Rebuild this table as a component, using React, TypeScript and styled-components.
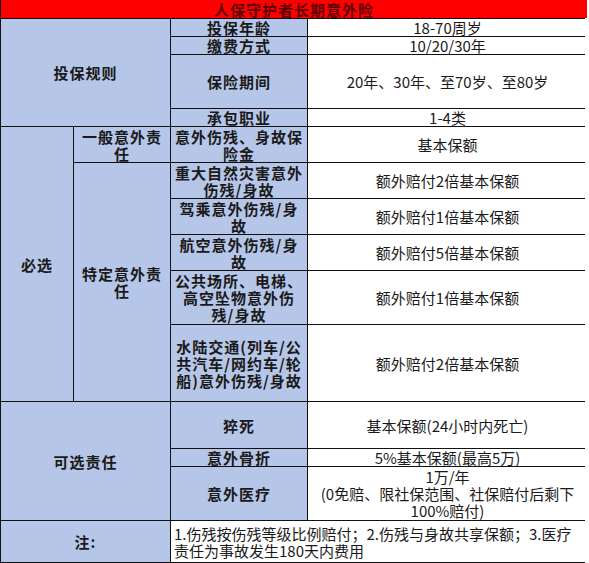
import { Fragment } from "react";
import styled, { createGlobalStyle } from "styled-components";

const GlobalStyle = createGlobalStyle`
  html, body {
    margin: 0;
    padding: 0;
    background: #ffffff;
  }
  body {
    font-family: "Noto Sans CJK SC", "Liberation Sans", sans-serif;
  }
`;

const Color = {
  LINE: "#111111",
  BLUE: "#b6c6e8",
  RED: "#ff0000",
  TITLE: "#5a0000",
};

const Sheet = styled.div`
  display: grid;
  width: 583px;
  grid-template-columns: 72px 96px 136px 279px;
  grid-template-rows: 18px 17px 17px 53px 17px 35px 35px 35px 35px 53px 76px 46px 17px 53px 41px;
  gap: 1px;
  padding: 0 1px 1px 1px;
  background: ${Color.LINE};
`;

interface CellProps {
  $col: string;
  $row: string;
  $kind?: "label" | "value" | "title" | "note";
}

const Cell = styled.div<CellProps>`
  grid-column: ${(p) => p.$col};
  grid-row: ${(p) => p.$row};
  display: flex;
  flex-direction: column;
  justify-content: center;
  align-items: ${(p) => (p.$kind === "note" ? "flex-start" : "center")};
  text-align: ${(p) => (p.$kind === "note" ? "left" : "center")};
  padding: 0 ${(p) => (p.$kind === "note" ? "3px" : "2px")};
  overflow: hidden;
  font-size: 15px;
  line-height: 17px;
  white-space: normal;
  word-break: break-all;
  background: ${(p) =>
    p.$kind === "title"
      ? Color.RED
      : p.$kind === "label"
      ? Color.BLUE
      : "#ffffff"};
  color: ${(p) => (p.$kind === "title" ? Color.TITLE : "#1a1a1a")};
  font-weight: ${(p) => (p.$kind === "label" || p.$kind === "title" ? 700 : 400)};
  letter-spacing: ${(p) => (p.$kind === "label" || p.$kind === "title" ? "1px" : "0")};
`;

const rules = [
  ["投保年龄", "18-70周岁"],
  ["缴费方式", "10/20/30年"],
  ["保险期间", "20年、30年、至70岁、至80岁"],
  ["承包职业", "1-4类"],
];

const special = [
  ["重大自然灾害意外伤残/身故", "额外赔付2倍基本保额"],
  ["驾乘意外伤残/身故", "额外赔付1倍基本保额"],
  ["航空意外伤残/身故", "额外赔付5倍基本保额"],
  ["公共场所、电梯、高空坠物意外伤残/身故", "额外赔付1倍基本保额"],
  ["水陆交通(列车/公共汽车/网约车/轮船)意外伤残/身故", "额外赔付2倍基本保额"],
];

export default function App() {
  return (
    <>
      <GlobalStyle />
      <Sheet>
        <Cell $kind="title" $col="1 / 5" $row="1">
          人保守护者长期意外险
        </Cell>

        <Cell $kind="label" $col="1 / 3" $row="2 / 6">
          投保规则
        </Cell>
        {rules.map(([label, value], i) => (
          <Fragment key={label}>
            <Cell $kind="label" $col="3" $row={`${i + 2}`}>
              {label}
            </Cell>
            <Cell $kind="value" $col="4" $row={`${i + 2}`}>
              {value}
            </Cell>
          </Fragment>
        ))}

        <Cell $kind="label" $col="1" $row="6 / 12">
          必选
        </Cell>
        <Cell $kind="label" $col="2" $row="6">
          一般意外责任
        </Cell>
        <Cell $kind="label" $col="3" $row="6">
          意外伤残、身故保险金
        </Cell>
        <Cell $kind="value" $col="4" $row="6">
          基本保额
        </Cell>
        <Cell $kind="label" $col="2" $row="7 / 12">
          特定意外责任
        </Cell>
        {special.map(([label, value], i) => (
          <Fragment key={label}>
            <Cell $kind="label" $col="3" $row={`${i + 7}`}>
              {label}
            </Cell>
            <Cell $kind="value" $col="4" $row={`${i + 7}`}>
              {value}
            </Cell>
          </Fragment>
        ))}

        <Cell $kind="label" $col="1 / 3" $row="12 / 15">
          可选责任
        </Cell>
        <Cell $kind="label" $col="3" $row="12">
          猝死
        </Cell>
        <Cell $kind="value" $col="4" $row="12">
          基本保额(24小时内死亡)
        </Cell>
        <Cell $kind="label" $col="3" $row="13">
          意外骨折
        </Cell>
        <Cell $kind="value" $col="4" $row="13">
          5%基本保额(最高5万)
        </Cell>
        <Cell $kind="label" $col="3" $row="14">
          意外医疗
        </Cell>
        <Cell $kind="value" $col="4" $row="14">
          <span>1万/年</span>
          <span>(0免赔、限社保范围、社保赔付后剩下</span>
          <span>100%赔付)</span>
        </Cell>

        <Cell $kind="label" $col="1 / 3" $row="15">
          注:
        </Cell>
        <Cell $kind="note" $col="3 / 5" $row="15">
          1.伤残按伤残等级比例赔付；2.伤残与身故共享保额；3.医疗责任为事故发生180天内费用
        </Cell>
      </Sheet>
    </>
  );
}
